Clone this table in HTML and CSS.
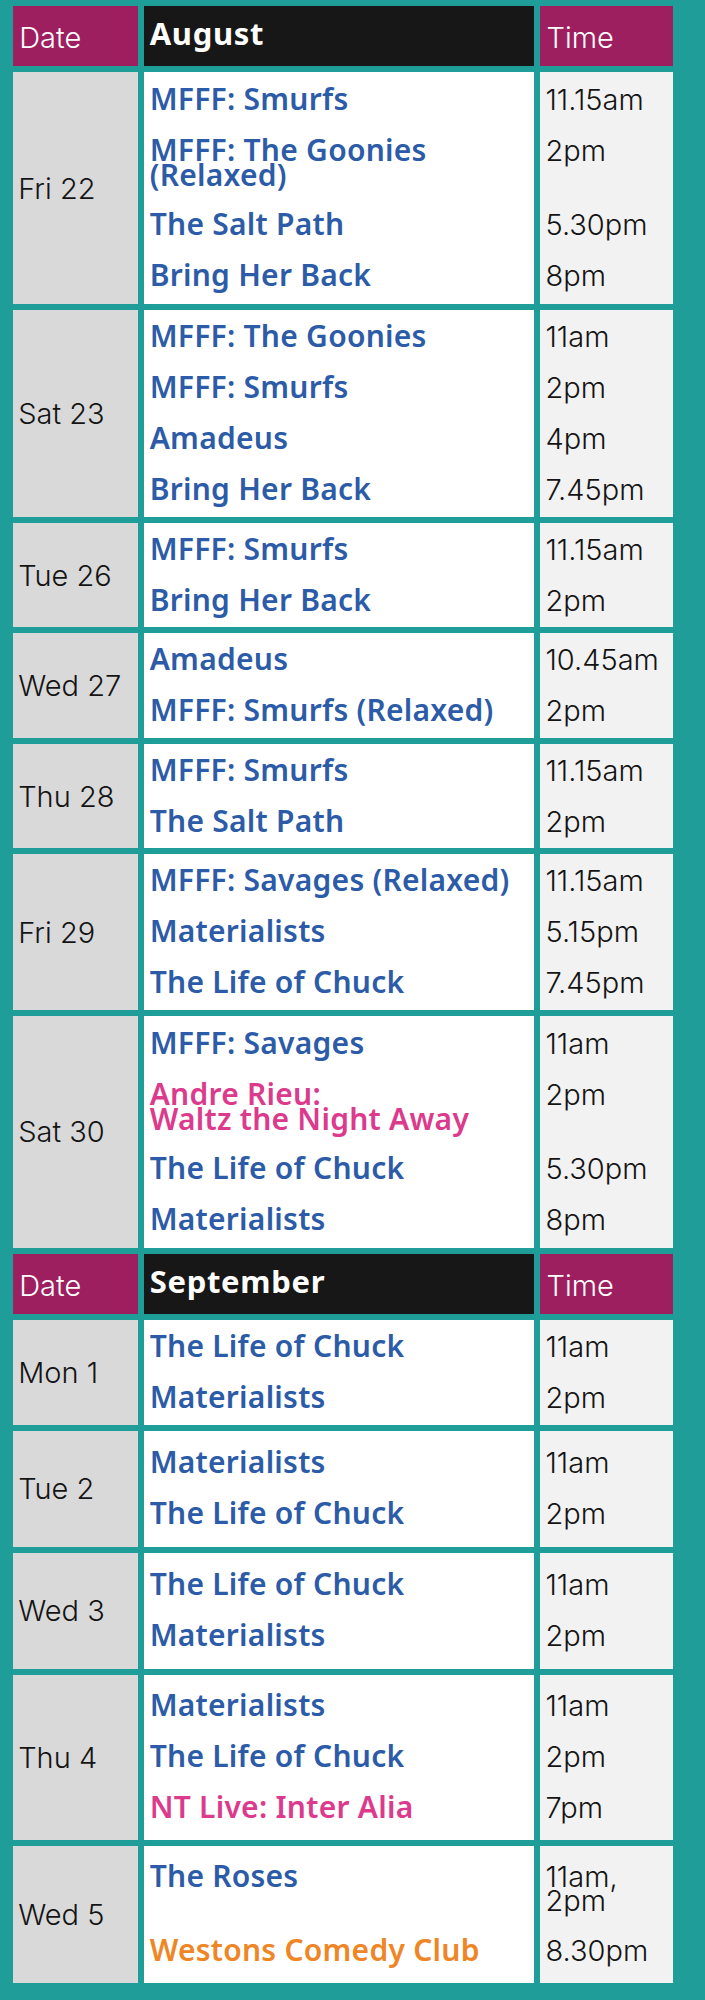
FILE: index.html
```html
<!DOCTYPE html>
<html lang="en">
<head>
<meta charset="utf-8">
<title>What's On – August &amp; September</title>
<link rel="stylesheet" href="styles.css">
</head>
<body>
<main class="sched">
  <div class="row head">
    <div class="c-date h-label">Date</div>
    <div class="c-ev month">August</div>
    <div class="c-time h-label">Time</div>
  </div>

  <div class="row day w">
    <div class="c-date">Fri 22</div>
    <div class="c-ev">
      <div class="it">MFFF: Smurfs</div>
      <div class="it wrap">MFFF: The Goonies<br>(Relaxed)</div>
      <div class="it">The Salt Path</div>
      <div class="it">Bring Her Back</div>
    </div>
    <div class="c-time">
      <div class="tm">11.15am</div>
      <div class="tm tall">2pm</div>
      <div class="tm">5.30pm</div>
      <div class="tm">8pm</div>
    </div>
  </div>

  <div class="row day">
    <div class="c-date">Sat 23</div>
    <div class="c-ev">
      <div class="it">MFFF: The Goonies</div>
      <div class="it">MFFF: Smurfs</div>
      <div class="it">Amadeus</div>
      <div class="it">Bring Her Back</div>
    </div>
    <div class="c-time">
      <div class="tm">11am</div>
      <div class="tm">2pm</div>
      <div class="tm">4pm</div>
      <div class="tm">7.45pm</div>
    </div>
  </div>

  <div class="row day">
    <div class="c-date">Tue 26</div>
    <div class="c-ev">
      <div class="it">MFFF: Smurfs</div>
      <div class="it">Bring Her Back</div>
    </div>
    <div class="c-time">
      <div class="tm">11.15am</div>
      <div class="tm">2pm</div>
    </div>
  </div>

  <div class="row day">
    <div class="c-date">Wed 27</div>
    <div class="c-ev">
      <div class="it">Amadeus</div>
      <div class="it">MFFF: Smurfs (Relaxed)</div>
    </div>
    <div class="c-time">
      <div class="tm">10.45am</div>
      <div class="tm">2pm</div>
    </div>
  </div>

  <div class="row day">
    <div class="c-date">Thu 28</div>
    <div class="c-ev">
      <div class="it">MFFF: Smurfs</div>
      <div class="it">The Salt Path</div>
    </div>
    <div class="c-time">
      <div class="tm">11.15am</div>
      <div class="tm">2pm</div>
    </div>
  </div>

  <div class="row day">
    <div class="c-date">Fri 29</div>
    <div class="c-ev">
      <div class="it">MFFF: Savages (Relaxed)</div>
      <div class="it">Materialists</div>
      <div class="it">The Life of Chuck</div>
    </div>
    <div class="c-time">
      <div class="tm">11.15am</div>
      <div class="tm">5.15pm</div>
      <div class="tm">7.45pm</div>
    </div>
  </div>

  <div class="row day w">
    <div class="c-date">Sat 30</div>
    <div class="c-ev">
      <div class="it">MFFF: Savages</div>
      <div class="it wrap pink">Andre Rieu:<br>Waltz the Night Away</div>
      <div class="it">The Life of Chuck</div>
      <div class="it">Materialists</div>
    </div>
    <div class="c-time">
      <div class="tm">11am</div>
      <div class="tm tall">2pm</div>
      <div class="tm">5.30pm</div>
      <div class="tm">8pm</div>
    </div>
  </div>

  <div class="row head">
    <div class="c-date h-label">Date</div>
    <div class="c-ev month">September</div>
    <div class="c-time h-label">Time</div>
  </div>

  <div class="row day">
    <div class="c-date">Mon 1</div>
    <div class="c-ev">
      <div class="it">The Life of Chuck</div>
      <div class="it">Materialists</div>
    </div>
    <div class="c-time">
      <div class="tm">11am</div>
      <div class="tm">2pm</div>
    </div>
  </div>

  <div class="row day l">
    <div class="c-date">Tue 2</div>
    <div class="c-ev">
      <div class="it">Materialists</div>
      <div class="it">The Life of Chuck</div>
    </div>
    <div class="c-time">
      <div class="tm">11am</div>
      <div class="tm">2pm</div>
    </div>
  </div>

  <div class="row day l">
    <div class="c-date">Wed 3</div>
    <div class="c-ev">
      <div class="it">The Life of Chuck</div>
      <div class="it">Materialists</div>
    </div>
    <div class="c-time">
      <div class="tm">11am</div>
      <div class="tm">2pm</div>
    </div>
  </div>

  <div class="row day m">
    <div class="c-date">Thu 4</div>
    <div class="c-ev">
      <div class="it">Materialists</div>
      <div class="it">The Life of Chuck</div>
      <div class="it pink">NT Live: Inter Alia</div>
    </div>
    <div class="c-time">
      <div class="tm">11am</div>
      <div class="tm">2pm</div>
      <div class="tm">7pm</div>
    </div>
  </div>

  <div class="row day m">
    <div class="c-date">Wed 5</div>
    <div class="c-ev">
      <div class="it tall">The Roses</div>
      <div class="it orange">Westons Comedy Club</div>
    </div>
    <div class="c-time">
      <div class="tm wrap">11am,<br>2pm</div>
      <div class="tm">8.30pm</div>
    </div>
  </div>
</main>
</body>
</html>
```
FILE: styles.css
```css
html, body {
  margin: 0;
  padding: 0;
  background: #1f9e99;
}

.sched {
  display: flex;
  flex-direction: column;
  gap: 6px;
  padding: 6px 0 17px 12.7px;
  width: 660px;
}

.row {
  display: flex;
  gap: 5.7px;
}

.c-date {
  width: 125.3px;
  flex: none;
  box-sizing: border-box;
  padding-left: 5.5px;
  font-family: "Inter", "Liberation Sans", sans-serif;
  font-weight: 300;
  font-size: 29px;
  color: #141414;
  background: #d9d9d9;
}

.c-ev {
  width: 390.6px;
  flex: none;
  box-sizing: border-box;
  padding-left: 6px;
  background: #ffffff;
}

.c-time {
  width: 132.7px;
  flex: none;
  box-sizing: border-box;
  padding-left: 5.5px;
  background: #f2f2f2;
}

/* header rows */
.head {
  height: 60.25px;
}

.head .h-label {
  background: #9e1f60;
  color: #ffffff;
  padding-top: 20px;
  line-height: 23px;
}

.head .c-time {
  font-family: "Inter", "Liberation Sans", sans-serif;
  font-weight: 300;
  font-size: 29px;
  padding-left: 6.5px;
}

.head .c-date {
  padding-left: 6.5px;
}

.month {
  background: #171717;
  color: #ffffff;
  font-family: "Noto Sans", "Liberation Sans", sans-serif;
  font-weight: 700;
  font-size: 31px;
  letter-spacing: 0.7px;
  line-height: 23px;
  padding-top: 16px;
}

/* day rows */
.day {
  --pad: 1.25px;
}

.day.w {
  --pad: 2.5px;
}

.day.l {
  --pad: 7px;
}

.day.m {
  --pad: 6px;
}

.day .c-date {
  display: flex;
  align-items: center;
}

.day .c-ev,
.day .c-time {
  padding-top: var(--pad);
  padding-bottom: var(--pad);
}

.it {
  font-family: "Noto Sans", "Liberation Sans", sans-serif;
  font-weight: 560;
  font-size: 30px;
  letter-spacing: 0.25px;
  line-height: 23px;
  padding: 12.5px 0 15.5px;
  color: #2c5ba8;
  white-space: nowrap;
}

.it.wrap {
  line-height: 25px;
  padding: 11.5px 0 12.5px;
}

.it.pink {
  color: #dc3a8c;
}

.it.orange {
  color: #ef8626;
}

.tm {
  font-family: "Inter", "Liberation Sans", sans-serif;
  font-weight: 300;
  font-size: 29px;
  line-height: 23px;
  padding: 13.5px 0 14.5px;
  color: #141414;
  white-space: nowrap;
}

.tm.wrap {
  line-height: 24px;
  padding: 13px 0 13px;
}

.tall {
  min-height: 74px;
  box-sizing: border-box;
}
```
